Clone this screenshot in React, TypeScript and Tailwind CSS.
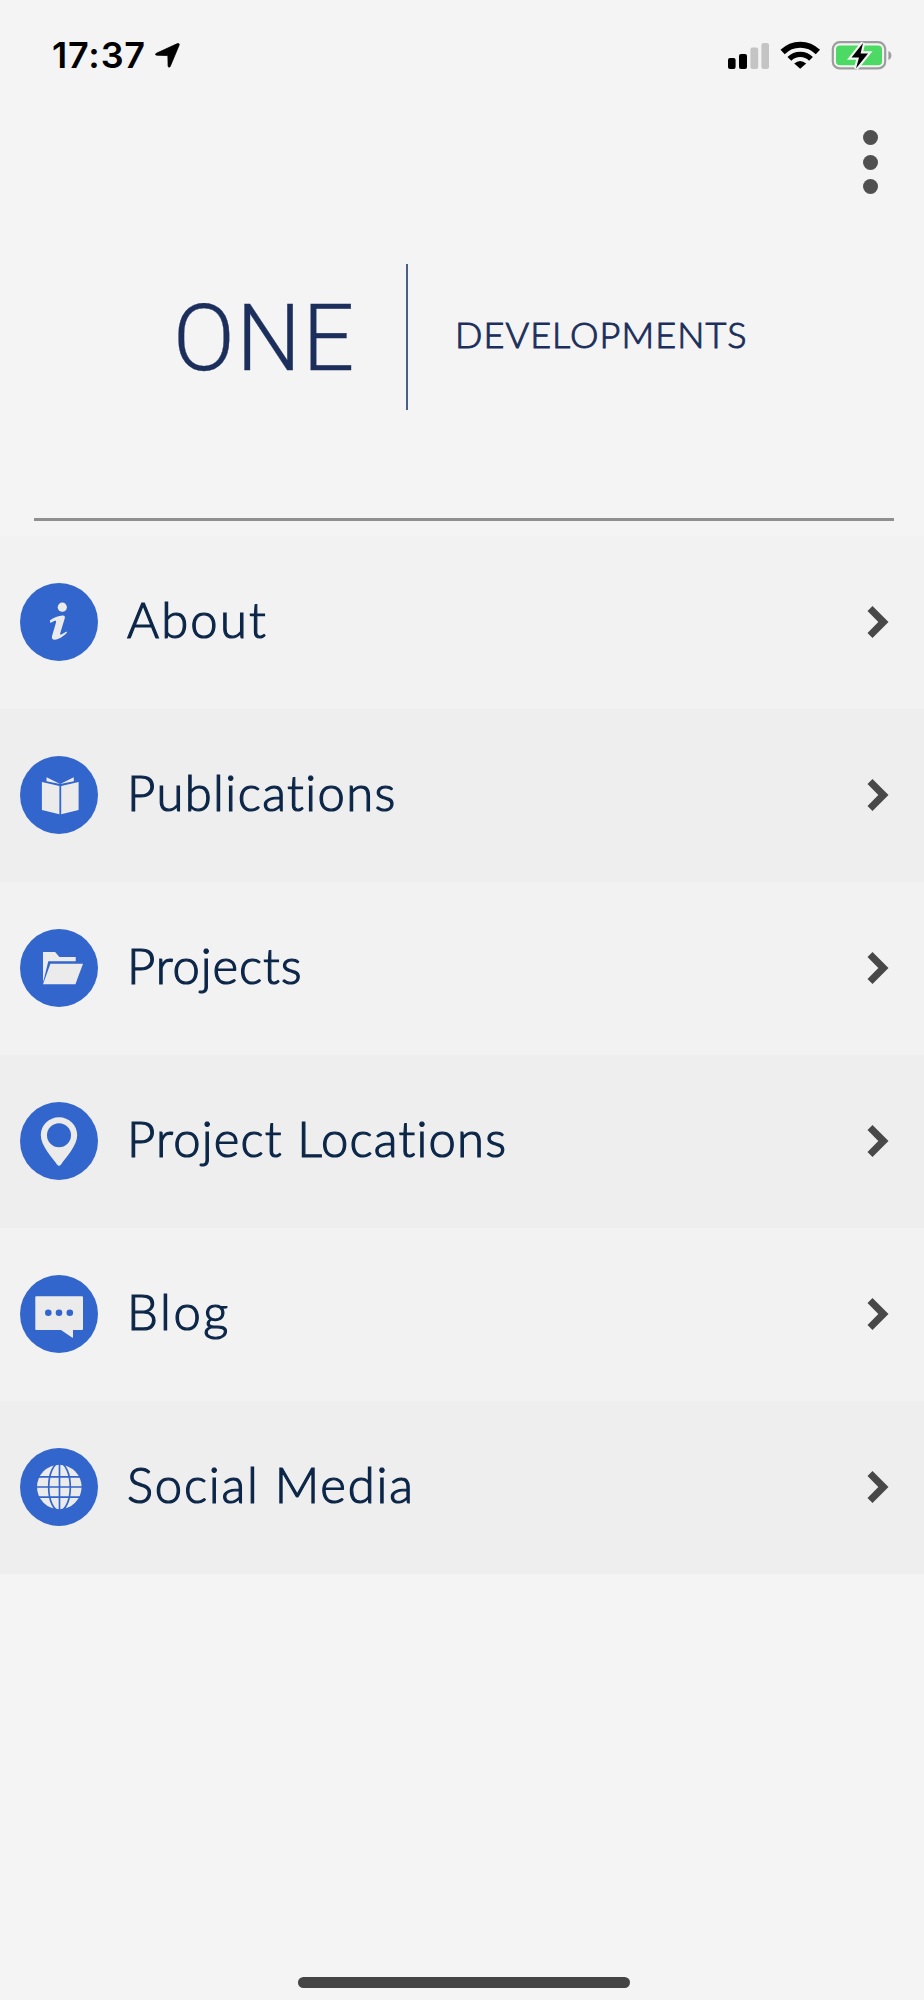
import type { ReactNode } from "react";

type MenuItem = {
  label: string;
  icon: ReactNode;
  tracking: string;
};

// Icons share a 78x78 box, the size of the round badge behind them.
const items: MenuItem[] = [
  {
    label: "About",
    tracking: "tracking-[2.2px]",
    icon: (
      <>
        <circle cx="42.3" cy="24.2" r="4.6" />
        <path d="M29.8 37.6C33.5 34.6 38.5 33 42.6 32.6C44.8 32.5 45.2 33.8 44.7 35.4L40.2 50.3C39.9 51.6 40.6 52 41.8 51.3L46.6 48.4L47 49.4C43.6 53.2 38.8 56.3 34.8 56.7C32.4 56.8 31.4 55.2 32.1 52.7L36 39.6C36.4 38 35.6 37.5 34.2 38L30.4 39.9Z" />
      </>
    ),
  },
  {
    label: "Publications",
    tracking: "tracking-[1.4px]",
    icon: (
      <>
        <path d="M21.9 26L39.4 30V58.3L21.9 54ZM41.2 30L58.6 26V54L41.2 58.3Z" />
        <path d="M26.5 21.3L40.2 28L26.5 25.2ZM53.8 21.3V25.2L40.2 28Z" />
      </>
    ),
  },
  {
    label: "Projects",
    tracking: "tracking-[0.9px]",
    icon: (
      <>
        <path d="M23 22.9H35.1L39.4 28H55.7V32.3H28.3L24.6 47.5L23 53Z" />
        <path d="M30.4 34.8H63L55.4 55.3H23Z" />
      </>
    ),
  },
  {
    label: "Project Locations",
    tracking: "tracking-[1.2px]",
    icon: (
      <path
        fillRule="evenodd"
        d="M39 15.2C49 15.2 57.2 23.1 57.2 33C57.2 43.5 46.6 54.5 41 62.5C39.8 64.2 38.2 64.2 37 62.5C31.4 54.5 20.8 43.5 20.8 33C20.8 23.1 29 15.2 39 15.2ZM39 21.3A12 12 0 1 0 39 45.3A12 12 0 1 0 39 21.3Z"
      />
    ),
  },
  {
    label: "Blog",
    tracking: "tracking-[2.6px]",
    icon: (
      <>
        <path d="M16 21.2H62Q63 21.2 63 22.2V54Q63 55 62 55H53V62Q53 63 52 62.4L41 55H16Q15.3 55 15.3 54V22.2Q15.3 21.2 16 21.2Z" />
        <g className="fill-[#3366cc]">
          <circle cx="28.3" cy="37.8" r="3.3" />
          <circle cx="39" cy="37.8" r="3.3" />
          <circle cx="49.8" cy="37.8" r="3.3" />
        </g>
      </>
    ),
  },
  {
    label: "Social Media",
    tracking: "tracking-[1.8px]",
    icon: (
      <>
        <circle cx="39.3" cy="39" r="22.3" />
        <g className="fill-none stroke-[#3366cc]" strokeWidth="1.7">
          <path d="M39.5 16V62M16 39H62M16 28.9H62M16 49.1H62" />
          <ellipse cx="39.5" cy="39" rx="10.8" ry="24" />
        </g>
      </>
    ),
  },
];

function StatusBar() {
  return (
    <header className="flex h-[111px] items-center pl-[52px] pr-[31px]">
      <span className="mb-px font-['Inter',sans-serif] text-[36px] font-semibold leading-none tracking-[0.8px]">
        17:37
      </span>
      <svg className="mb-px ml-auto mr-[548px]" width="25" height="25" viewBox="0 0 25 25">
        <path
          d="M1.5 10.2L22.5.6C23.8.1 24.6.9 24.1 2.2L15.3 23.2C14.7 24.6 13.2 24.5 13.1 22.9L12.9 12.6L1.8 12.2C.2 12.1.1 10.8 1.5 10.2Z"
          fill="#000"
          stroke="#000"
          strokeWidth="0.8"
        />
      </svg>
      <svg className="mb-px shrink-0" width="165" height="30" viewBox="0 0 165 30">
        <rect x="0" y="18" width="7.6" height="11" rx="2" />
        <rect x="11" y="14" width="8" height="15" rx="2" />
        <rect x="22.4" y="7.5" width="7.8" height="21.5" rx="2" fill="#c4c4c4" />
        <rect x="33.4" y="3" width="7.6" height="26" rx="2" fill="#c4c4c4" />
        <g fill="none" stroke="#000">
          <path d="M54.6 12C64.5 2.2 80 2.2 89.9 12" strokeWidth="6" />
          <path d="M61.4 18.9C67.4 12.9 77 12.9 83 18.9" strokeWidth="5.4" />
        </g>
        <path d="M66.2 23.6Q72.2 18.3 78.2 23.6L72.2 28.8Z" />
        <rect x="104.8" y="2.2" width="52.4" height="26.2" rx="7" fill="none" stroke="#9d9d9f" strokeWidth="2.2" />
        <rect x="108" y="5.6" width="46" height="19.6" rx="3.8" fill="#4cd964" />
        <path d="M160.4 11C164.4 12.4 164.4 18.6 160.4 20Z" fill="#9d9d9f" />
        <path
          d="M135 3L123.5 17.5H131L128 28.5L140 13.4H132.6Z"
          stroke="#f4f4f4"
          strokeWidth="4.4"
          paintOrder="stroke"
        />
      </svg>
    </header>
  );
}

function MenuRow({ item }: { item: MenuItem }) {
  return (
    <li className="flex h-[173px] items-center pb-0.5 pl-5 pr-[35px] odd:bg-[#f2f2f2] even:bg-[#eeeeee]">
      <svg className="size-[78px] shrink-0 rounded-full bg-[#3366cc] fill-[#ebebeb]" viewBox="0 0 78 78">
        {item.icon}
      </svg>
      <span
        className={`mb-1 ml-[29px] font-['Lato',sans-serif] text-[49px] font-light leading-none text-[#0c2648] [-webkit-text-stroke:1.2px_#0c2648] ${item.tracking}`}
      >
        {item.label}
      </span>
      <svg className="ml-auto" width="22" height="34" viewBox="0 0 22 34">
        <path d="M5.5 1L21.5 17L5.5 33L.5 28L11.3 17L.5 6Z" fill="#484848" />
      </svg>
    </li>
  );
}

export default function App() {
  return (
    <div className="flex h-[2000px] w-[924px] flex-col bg-[#f4f4f4] text-black">
      <StatusBar />

      <div className="flex h-[84px] justify-end pr-[46px] pt-[19px]">
        <button aria-label="More options" className="flex flex-col gap-[9.5px]">
          <span className="size-[15px] rounded-full bg-[#505050]" />
          <span className="size-[15px] rounded-full bg-[#505050]" />
          <span className="size-[15px] rounded-full bg-[#505050]" />
        </button>
      </div>

      <div className="mt-[69px] flex h-[146px] items-center pl-[173px] text-[#1c2f5c]">
        <div className="w-[233px] pt-[3px]">
          <span className="inline-block origin-left scale-x-[0.98] font-['Roboto',sans-serif] text-[93px] font-light leading-none tracking-[1.5px] [-webkit-text-stroke:0.3px_#1c2f5c]">
            ONE
          </span>
        </div>
        <div className="h-full w-0.5 bg-[#4a5f86]" />
        <span className="mb-[7px] ml-[47px] font-['Lato',sans-serif] text-[36px] font-light leading-none tracking-[1.1px] [-webkit-text-stroke:1px_#1c2f5c]">
          DEVELOPMENTS
        </span>
      </div>

      <hr className="ml-[34px] mt-[108px] w-[860px] border-t-[3px] border-[#8f8f90]" />

      <ul className="mt-[15px]">
        {items.map((item) => (
          <MenuRow key={item.label} item={item} />
        ))}
      </ul>

      <div className="mb-3 ml-[298px] mt-auto h-[11px] w-[332px] rounded-full bg-[#444444]" />
    </div>
  );
}
